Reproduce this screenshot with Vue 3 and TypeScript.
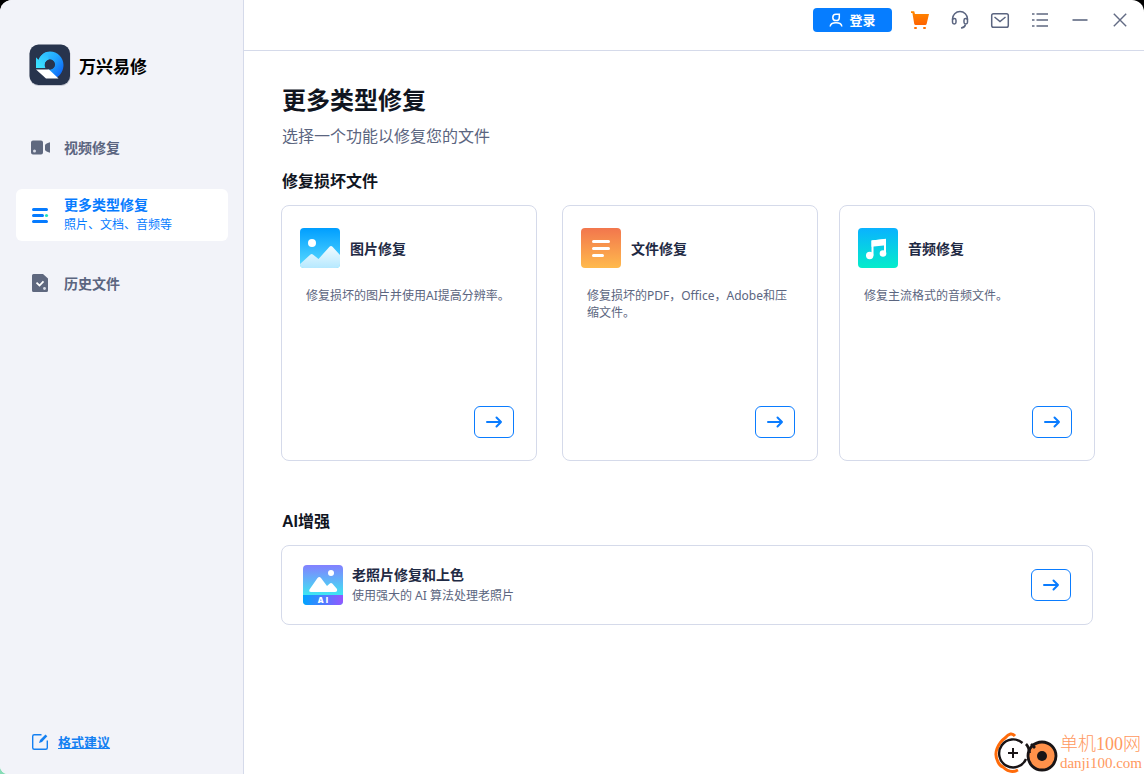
<script setup lang="ts">
interface RepairCard {
  id: 'photo' | 'file' | 'audio'
  title: string
  text: string
}

const cards: RepairCard[] = [
  { id: 'photo', title: '图片修复', text: '修复损坏的图片并使用AI提高分辨率。' },
  { id: 'file', title: '文件修复', text: '修复损坏的PDF，Office，Adobe和压缩文件。' },
  { id: 'audio', title: '音频修复', text: '修复主流格式的音频文件。' },
]
</script>

<template>
  <div class="window">
    <aside class="sidebar">
      <div class="brand">
        <svg class="brand-logo" width="42" height="42" viewBox="0 0 42 42" aria-hidden="true">
          <defs>
            <linearGradient id="logoRing" x1="0" y1="0.2" x2="1" y2="0.9">
              <stop offset="0" stop-color="#35d0ff" />
              <stop offset="0.5" stop-color="#22a7ff" />
              <stop offset="1" stop-color="#0a5cf5" />
            </linearGradient>
            <linearGradient id="logoTail" x1="0" y1="1" x2="0.6" y2="0">
              <stop offset="0" stop-color="#3de8ff" />
              <stop offset="1" stop-color="#2ebcff" />
            </linearGradient>
          </defs>
          <rect x="0.5" y="1.5" width="41" height="40.5" rx="9" fill="#c9cbd6" />
          <rect x="0.5" y="0.5" width="40.500" height="40.500" rx="9" fill="#28344d" />
          <path d="M7 13.500L9.500 16C12 10.500 16 7.500 21 7.500C28.500 7.500 34.500 13.500 34.500 21C34.500 26 32 31 27 34L18.500 25.500H21A5 5 0 1 0 16 22.500V24H7Z" fill="url(#logoRing)" />
          <path d="M7 13.500L9.500 16C11 12 14 9 18 8L20 16A5 5 0 0 0 16.500 24H7Z" fill="url(#logoTail)" />
          <circle cx="21" cy="20.500" r="5" fill="#28344d" />
          <path d="M7 25.500H20L29.500 34.500H17Z" fill="#fff" />
        </svg>
        <span class="brand-name">万兴易修</span>
      </div>

      <nav class="nav">
        <button type="button" class="nav-item">
          <svg width="24" height="24" viewBox="0 0 24 24" aria-hidden="true">
            <path d="M5 4.500h8a2 2 0 0 1 2 2v10a2 2 0 0 1-2 2H5a2 2 0 0 1-2-2v-10a2 2 0 0 1 2-2z" fill="#5f687f" />
            <circle cx="6.500" cy="15" r="1.500" fill="#d9dce7" />
            <path d="M22 6.200v10.600q-5-1.300-5-3.300v-4q0-2 5-3.300z" fill="#5f687f" />
          </svg>
          <span class="nav-text"><strong>视频修复</strong></span>
        </button>
        <button type="button" class="nav-item active" aria-current="page">
          <svg width="24" height="24" viewBox="0 0 24 24" aria-hidden="true">
            <g stroke="#067bff" stroke-width="3" stroke-linecap="round">
              <path d="M5.500 6.500h13M5.500 12.500h9M5.500 18.500h13" />
            </g>
            <circle cx="18.500" cy="12.500" r="1.600" fill="#20e3bd" />
          </svg>
          <span class="nav-text"><strong>更多类型修复</strong><small>照片、文档、音频等</small></span>
        </button>
        <button type="button" class="nav-item">
          <svg width="24" height="24" viewBox="0 0 24 24" aria-hidden="true">
            <path d="M5.500 2H15l5 4.500V18.500a1.500 1.500 0 0 1-1.500 1.500h-13A1.500 1.500 0 0 1 4 18.500v-15A1.500 1.500 0 0 1 5.500 2z" fill="#5f687f" />
            <path d="M8.500 10.700l3 2.800 4-4.200" fill="none" stroke="#fff" stroke-width="1.800" />
            <circle cx="16.500" cy="16.500" r="1.400" fill="#d9dce7" />
          </svg>
          <span class="nav-text"><strong>历史文件</strong></span>
        </button>
      </nav>

      <a class="suggest" href="#">
        <svg width="18" height="18" viewBox="0 0 18 18" aria-hidden="true">
          <path d="M10.500 1.700H3.200A1.500 1.500 0 0 0 1.700 3.200v11.600a1.500 1.500 0 0 0 1.500 1.500h11.600a1.500 1.500 0 0 0 1.500-1.500V7.500" fill="none" stroke="#1480f2" stroke-width="1.400" />
          <path d="M8 10l1-3L14.500 1.500l1.800 1.700L11 9z" fill="#1480f2" />
        </svg>
        <span>格式建议</span>
      </a>
    </aside>

    <div class="main">
      <header class="topbar">
        <button type="button" class="login">
          <svg width="14" height="16" viewBox="0 0 14 16" fill="none" stroke="#fff" stroke-width="1.500" aria-hidden="true">
            <path d="M10.300 2.200H7A3.200 3.200 0 1 0 7 8.600Q10.300 8.600 10.300 5.400Z" />
            <path d="M1.200 14.500C1.500 9.500 12.500 9.500 12.800 14.500" />
          </svg>
          <span>登录</span>
        </button>
        <button type="button" class="tool" aria-label="购物车">
          <svg width="20" height="20" viewBox="0 0 20 20" aria-hidden="true">
            <defs>
              <linearGradient id="cartFill" x1="0" y1="0" x2="0" y2="1">
                <stop offset="0" stop-color="#ff8a00" />
                <stop offset="1" stop-color="#ff6200" />
              </linearGradient>
            </defs>
            <path d="M1 1.200h3.200L5 4h14l-2.300 9.800q-.300 1.200-1.500 1.200H5.700q-1.200 0-1.500-1.200L2.400 3H1z" fill="url(#cartFill)" />
            <rect x="4" y="17" width="3" height="2" rx="1" fill="#ff6f00" />
            <rect x="13" y="17" width="3" height="2" rx="1" fill="#ff6f00" />
          </svg>
        </button>
        <button type="button" class="tool" aria-label="客服">
          <svg width="20" height="20" viewBox="0 0 20 20" fill="none" stroke="#5b6580" stroke-width="1.500" aria-hidden="true">
            <path d="M2.500 10V9a7.500 7.500 0 0 1 15 0v1" />
            <rect x="2.500" y="8.500" width="3.500" height="5.500" rx="1.700" />
            <rect x="14" y="8.500" width="3.500" height="5.500" rx="1.700" />
            <path d="M15.500 14.500q-.800 3.200-4.500 3.500" />
          </svg>
        </button>
        <button type="button" class="tool" aria-label="邮件">
          <svg width="20" height="20" viewBox="0 0 20 20" fill="none" stroke="#5b6580" stroke-width="1.500" aria-hidden="true">
            <rect x="1.700" y="3.700" width="16.600" height="13.600" rx="1.800" />
            <path d="M4.500 7l5.500 4.500L15.500 7" />
          </svg>
        </button>
        <button type="button" class="tool" aria-label="菜单">
          <svg width="20" height="20" viewBox="0 0 20 20" stroke="#5f6880" stroke-width="1.600" aria-hidden="true">
            <path d="M2 4h2.500M6.500 4H18M2 10h2.500M6.500 10H18M2 16h2.500M6.500 16H18" />
          </svg>
        </button>
        <button type="button" class="tool" aria-label="最小化">
          <svg width="20" height="20" viewBox="0 0 20 20" stroke="#7f879b" stroke-width="1.800" aria-hidden="true">
            <path d="M2.500 10h15" />
          </svg>
        </button>
        <button type="button" class="tool" aria-label="关闭">
          <svg width="20" height="20" viewBox="0 0 20 20" stroke="#626b84" stroke-width="1.400" aria-hidden="true">
            <path d="M3.800 3.800l12.400 12.400M16.200 3.800L3.800 16.200" />
          </svg>
        </button>
      </header>

      <main class="content">
        <h1>更多类型修复</h1>
        <p class="lead">选择一个功能以修复您的文件</p>

        <h2>修复损坏文件</h2>
        <div class="cards">
          <article v-for="card in cards" :key="card.id" class="card">
            <div class="card-head">
              <svg v-if="card.id === 'photo'" width="40" height="40" viewBox="0 0 40 40" aria-hidden="true">
                <defs>
                  <linearGradient id="photoSky" x1="0" y1="0" x2="0" y2="1">
                    <stop offset="0" stop-color="#009eff" />
                    <stop offset="1" stop-color="#5cdcff" />
                  </linearGradient>
                  <linearGradient id="photoHill" x1="0" y1="0" x2="0" y2="1">
                    <stop offset="0" stop-color="#f2fbff" />
                    <stop offset="1" stop-color="#b6e9ff" />
                  </linearGradient>
                </defs>
                <rect width="40" height="40" rx="4" fill="url(#photoSky)" />
                <circle cx="12" cy="15" r="4" fill="#fff" />
                <path d="M0 36L10.500 26.500q1.200-1.100 2.400 0L18.500 31 29.500 18.700q1.500-1.500 3 0L40 27v9a4 4 0 0 1-4 4H4a4 4 0 0 1-4-4z" fill="url(#photoHill)" />
              </svg>
              <svg v-else-if="card.id === 'file'" width="40" height="40" viewBox="0 0 40 40" aria-hidden="true">
                <defs>
                  <linearGradient id="fileFill" x1="0" y1="0" x2="0" y2="1">
                    <stop offset="0" stop-color="#f2764d" />
                    <stop offset="1" stop-color="#ffba4d" />
                  </linearGradient>
                </defs>
                <rect width="40" height="40" rx="4" fill="url(#fileFill)" />
                <path d="M12.500 13.500h15M12.500 20.500h15M12.500 27.500h9" stroke="#fff" stroke-width="3" stroke-linecap="round" />
              </svg>
              <svg v-else width="40" height="40" viewBox="0 0 40 40" aria-hidden="true">
                <defs>
                  <linearGradient id="audioFill" x1="0" y1="0" x2="0" y2="1">
                    <stop offset="0" stop-color="#0ab2ff" />
                    <stop offset="1" stop-color="#04edcb" />
                  </linearGradient>
                </defs>
                <rect width="40" height="40" rx="4" fill="url(#audioFill)" />
                <path d="M14.500 27.500V13.500L27 12V25" fill="none" stroke="#fff" stroke-width="2" />
                <path d="M13.500 12.500L28 11v6.200l-14.500 1.500z" fill="#fff" />
                <circle cx="11.700" cy="27.500" r="3.700" fill="#fff" />
                <circle cx="25" cy="25.500" r="3.300" fill="#fff" />
              </svg>
              <h3>{{ card.title }}</h3>
            </div>
            <p class="card-text">{{ card.text }}</p>
            <button type="button" class="go" :aria-label="card.title">
              <svg width="18" height="14" viewBox="0 0 18 14" fill="none" stroke="#0a7cff" stroke-width="2" stroke-linecap="round" stroke-linejoin="round" aria-hidden="true">
                <path d="M2 7h14M11.500 2.500L16 7l-4.500 4.500" />
              </svg>
            </button>
          </article>
        </div>

        <h2>AI增强</h2>
        <article class="wide-card">
          <svg width="40" height="40" viewBox="0 0 40 40" aria-hidden="true">
            <defs>
              <linearGradient id="aiSky" x1="0" y1="0" x2="0" y2="1">
                <stop offset="0" stop-color="#8380ff" />
                <stop offset="0.75" stop-color="#3ee6f2" />
              </linearGradient>
              <linearGradient id="aiBand" x1="0" y1="0" x2="1" y2="0">
                <stop offset="0" stop-color="#00a3ff" />
                <stop offset="1" stop-color="#9557ff" />
              </linearGradient>
            </defs>
            <rect width="40" height="40" rx="4" fill="url(#aiSky)" />
            <path d="M0 30h40v6a4 4 0 0 1-4 4H4a4 4 0 0 1-4-4z" fill="url(#aiBand)" />
            <circle cx="28" cy="8" r="3" fill="#fff" />
            <path d="M6.500 24.500L14.500 13q1.800-2.200 3.500 0L24 21l2.500-2.300q1.500-1.300 3 0L34 24q.700 3-2 3H8q-2.500 0-1.500-2.500z" fill="#fff" />
            <text class="ai-tag" x="20" y="38" text-anchor="middle">A I</text>
          </svg>
          <div class="wide-text">
            <h3>老照片修复和上色</h3>
            <p>使用强大的 AI 算法处理老照片</p>
          </div>
          <button type="button" class="go" aria-label="老照片修复和上色">
            <svg width="18" height="14" viewBox="0 0 18 14" fill="none" stroke="#0a7cff" stroke-width="2" stroke-linecap="round" stroke-linejoin="round" aria-hidden="true">
              <path d="M2 7h14M11.500 2.500L16 7l-4.500 4.500" />
            </svg>
          </button>
        </article>
      </main>
    </div>

    <div class="watermark">
      <svg width="64" height="42" viewBox="0 0 64 42" fill="none" aria-hidden="true">
        <path d="M21 4Q17-1 11 6Q8 8 6 11Q-1 21 4 30Q6 34 9 35Q16 42 24 38" stroke="#ff6b0a" stroke-width="3" />
        <path d="M28.500 11A14 14 0 1 0 32 27" stroke="#181416" stroke-width="2.400" />
        <path d="M19 16v10M14 21h10" stroke="#181416" stroke-width="2" />
        <circle cx="48" cy="24" r="14" fill="#ff914a" stroke="#181416" stroke-width="2.800" />
        <path d="M32 12q3 3 3.500 9M37 12l4 4" stroke="#181416" stroke-width="2.800" />
        <circle cx="48" cy="24" r="5" fill="#181416" />
      </svg>
      <div class="watermark-text">
        <span class="watermark-name">单机100网</span>
        <span class="watermark-site">danji100.com</span>
      </div>
    </div>
  </div>
</template>

<style>
html {
  background: linear-gradient(#000 50%, #86dcb6 50%);
}

body {
  margin: 0;
}
</style>

<style scoped>
* {
  box-sizing: border-box;
}

.window {
  position: relative;
  display: flex;
  min-height: 100vh;
  overflow: hidden;
  border-radius: 12px 12px 0 8px;
  background: #fff;
  color: #5b6580;
  font-family: "Noto Sans", "Noto Sans CJK SC", sans-serif;
  font-size: 12px;
}

button {
  margin: 0;
  padding: 0;
  border: 0;
  background: none;
  color: inherit;
  font: inherit;
  cursor: pointer;
}

h1,
h2,
h3,
p {
  margin: 0;
}

svg {
  display: block;
  flex: none;
}

.sidebar {
  display: flex;
  flex: none;
  flex-direction: column;
  width: 244px;
  padding: 44px 15px 21px 16px;
  border-right: 1px solid #d5daea;
  background: #f2f3f9;
}

.brand {
  display: flex;
  align-items: center;
  gap: 8px;
  height: 42px;
  padding-left: 13px;
}

.brand-name {
  padding-top: 4px;
  color: #000;
  font-size: 17px;
  font-weight: 700;
  line-height: 24px;
}

.nav {
  display: flex;
  flex-direction: column;
  gap: 16px;
  margin-top: 35px;
}

.nav-item {
  display: flex;
  align-items: center;
  gap: 12px;
  height: 52px;
  padding: 2px 12px 0;
  border-radius: 6px;
  text-align: left;
}

.nav-text {
  display: flex;
  flex-direction: column;
}

.nav-text strong {
  font-size: 14px;
  font-weight: 700;
  line-height: 20px;
}

.nav-text small {
  font-size: 12px;
  line-height: 20px;
}

.nav-item.active {
  padding-top: 0;
  background: #fff;
  color: #067bff;
}

.suggest {
  display: flex;
  align-items: center;
  gap: 9px;
  margin-top: auto;
  padding-left: 15px;
  color: #1480f2;
  font-size: 13px;
  font-weight: 700;
  line-height: 22px;
  text-decoration: none;
}

.suggest span {
  text-decoration: underline;
}

.main {
  flex: 1;
  min-width: 0;
}

.topbar {
  display: flex;
  justify-content: flex-end;
  height: 51px;
  padding: 8px 4px 0 0;
  border-bottom: 1px solid #d5daea;
}

.login {
  display: flex;
  align-items: center;
  justify-content: center;
  gap: 6px;
  width: 79px;
  height: 24px;
  margin-right: 8px;
  border-radius: 4px;
  background: #067dff;
  color: #fff;
  font-size: 13px;
  font-weight: 700;
  line-height: 24px;
}

.tool {
  display: flex;
  align-items: center;
  justify-content: center;
  width: 40px;
  height: 24px;
}

.content {
  padding: 33px 49px 40px 37px;
}

h1 {
  padding-left: 1px;
  color: #10151f;
  font-size: 24px;
  line-height: 32px;
}

.lead {
  margin-top: 8px;
  padding-left: 1px;
  font-size: 16px;
  line-height: 24px;
}

h2 {
  margin: 22px 0 11px 1px;
  color: #10151f;
  font-family: "Liberation Sans", "Noto Sans CJK SC", sans-serif;
  font-size: 16px;
  line-height: 24px;
}

.cards {
  display: flex;
  gap: 21px;
  margin-bottom: 49px;
}

.card {
  display: flex;
  flex: 1;
  flex-direction: column;
  min-width: 0;
  min-height: 256px;
  padding: 22px 22px 22px 18px;
  border: 1px solid #d5daea;
  border-radius: 8px;
}

.card:first-child {
  margin-right: 4px;
}

.card-head {
  display: flex;
  align-items: center;
  gap: 10px;
}

h3 {
  color: #1f2a44;
  font-size: 14px;
  line-height: 20px;
}

.card-head h3 {
  padding-top: 2px;
}

.card-text {
  margin: 19px 0 20px;
  padding-left: 6px;
  line-height: 17px;
}

.go {
  display: flex;
  align-items: center;
  justify-content: center;
  align-self: flex-end;
  width: 40px;
  height: 32px;
  margin-top: auto;
  border: 1px solid #0a7cff;
  border-radius: 6px;
}

.wide-card {
  display: flex;
  align-items: center;
  gap: 9px;
  min-height: 80px;
  margin-right: 2px;
  padding: 0 21px;
  border: 1px solid #d5daea;
  border-radius: 8px;
}

.wide-card .go {
  align-self: center;
  margin: 0 0 0 auto;
}

.wide-text p {
  padding-top: 1px;
  line-height: 20px;
}

.ai-tag {
  fill: #fff;
  font-family: "Open Sans", sans-serif;
  font-size: 8px;
  font-weight: 800;
}

.watermark {
  position: absolute;
  right: 2px;
  bottom: 0;
  display: flex;
  align-items: center;
  gap: 2px;
}

.watermark-text {
  display: flex;
  flex-direction: column;
  color: #ff9960;
  font-family: "Liberation Serif", "Noto Sans CJK SC", serif;
}

.watermark-name {
  font-size: 18px;
  font-weight: 300;
  line-height: 20px;
}

.watermark-site {
  font-size: 15px;
  line-height: 18px;
}
</style>
